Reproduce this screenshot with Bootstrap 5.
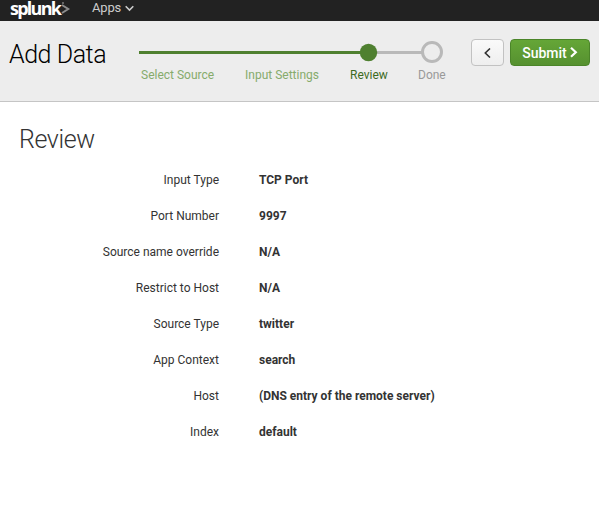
<!DOCTYPE html>
<html lang="en">
<head>
<meta charset="utf-8">
<title>Add Data - Review</title>
<meta name="viewport" content="width=device-width, initial-scale=1">
<link href="https://cdn.jsdelivr.net/npm/bootstrap@5.3.0/dist/css/bootstrap.min.css" rel="stylesheet">
<style>
body { font-family: Roboto, "Liberation Sans", sans-serif; font-size: 12px; line-height: 20px; color: #333; background: #fff; overflow: hidden; }
.topbar { height: 21px; background: #222; padding-left: 10px; }
.brand { width: 61px; height: 21px; color: #fff; font: 700 18px/16px "Open Sans", sans-serif; letter-spacing: -1.75px; }
.brand span { width: 52px; }
.apps { margin-left: 21px; color: #ccc; font-size: 13px; line-height: 16px; letter-spacing: -.2px; }
.wizard { height: 81px; background: #ededed; border-bottom: 1px solid #c5c5c5; padding: 0 9px; }
.page-name { width: 130px; font-size: 25px; font-weight: 300; line-height: 30px; color: #000; margin: 19px 0 0; letter-spacing: -.45px; white-space: nowrap; }
.steps { width: 310px; padding-top: 18px; }
.step-labels { gap: 30px; padding-left: 2px; color: #86ab6c; white-space: nowrap; }
.step-labels span:first-child { width: 74px; }
.step-labels span:nth-child(2) { width: 75px; }
.step-labels .current { color: #3d6b1f; width: 38px; }
.step-labels .pending { color: #999; }
.actions { gap: 6px; padding-top: 18px; }
.actions .btn { height: 27px; border-radius: 4px; padding: 0; }
.btn-back { width: 33px; border: 1px solid #c2c2c2; background: linear-gradient(#fafafa, #eee); }
.btn-submit { width: 80px; color: #fff; border: 1px solid #4b8529; background: linear-gradient(#65a637, #569130); font-size: 14px; font-weight: 500; line-height: 20px; }
.btn-submit:hover { color: #fff; }
.btn-submit svg { margin-left: 3px; }
.section-title { font-size: 25px; font-weight: 300; line-height: 30px; margin: 23px 0 7px 19px; color: #333; letter-spacing: -.4px; }
.review-row { height: 36px; padding-top: 8px; white-space: nowrap; }
.review-row dt { width: 219px; font-weight: 400; text-align: right; }
.review-row dd { margin: 0 0 0 40px; font-weight: 700; }
</style>
</head>
<body>
<nav class="topbar d-flex align-items-start">
  <a class="brand d-flex text-decoration-none" href="#"><span>splunk</span><svg width="10" height="16" viewBox="0 0 10 16" class="flex-shrink-0" fill="none" stroke="#8c8c8c" stroke-width="2"><path d="M1 5 7.2 9 1 13"/><path d="M1 3h2" stroke="#666"/></svg></a>
  <span class="apps d-flex align-items-center">Apps<svg class="ms-1" width="9" height="7" viewBox="0 0 9 7" fill="none" stroke="#ccc" stroke-width="1.6"><path d="m.7 1.2 3.8 3.8L8.3 1.2"/></svg></span>
</nav>
<header class="wizard d-flex">
  <h1 class="page-name">Add Data</h1>
  <div class="steps">
    <svg class="d-block" width="310" height="26" viewBox="0 0 310 26">
      <path d="M0 13.5h229" stroke="#4f8030" stroke-width="3"/>
      <path d="M229 13.5h54" stroke="#b9b9b9" stroke-width="3"/>
      <circle cx="229.5" cy="13.5" r="8.7" fill="#4f8030"/>
      <circle cx="293" cy="13" r="9.5" fill="#ededed" stroke="#b9b9b9" stroke-width="3"/>
    </svg>
    <div class="step-labels d-flex"><span>Select Source</span><span>Input Settings</span><span class="current">Review</span><span class="pending">Done</span></div>
  </div>
  <div class="actions d-flex ms-auto">
    <button class="btn btn-back d-flex align-items-center justify-content-center" aria-label="Back"><svg width="7" height="10" viewBox="0 0 7 10" fill="none" stroke="#333" stroke-width="1.6"><path d="M6 .5 1.3 5 6 9.5"/></svg></button>
    <button class="btn btn-submit d-flex align-items-center justify-content-center"><span>Submit</span><svg width="8" height="11" viewBox="0 0 8 11" fill="none" stroke="#fff" stroke-width="2.2"><path d="M1 .8 5.8 5.3 1 9.8"/></svg></button>
  </div>
</header>
<main>
  <h2 class="section-title">Review</h2>
  <dl class="m-0">
    <div class="review-row d-flex"><dt>Input Type</dt><dd>TCP Port</dd></div>
    <div class="review-row d-flex"><dt>Port Number</dt><dd>9997</dd></div>
    <div class="review-row d-flex"><dt>Source name override</dt><dd>N/A</dd></div>
    <div class="review-row d-flex"><dt>Restrict to Host</dt><dd>N/A</dd></div>
    <div class="review-row d-flex"><dt>Source Type</dt><dd>twitter</dd></div>
    <div class="review-row d-flex"><dt>App Context</dt><dd>search</dd></div>
    <div class="review-row d-flex"><dt>Host</dt><dd>(DNS entry of the remote server)</dd></div>
    <div class="review-row d-flex"><dt>Index</dt><dd>default</dd></div>
  </dl>
</main>
<script src="https://cdn.jsdelivr.net/npm/bootstrap@5.3.0/dist/js/bootstrap.bundle.min.js"></script>
</body>
</html>
